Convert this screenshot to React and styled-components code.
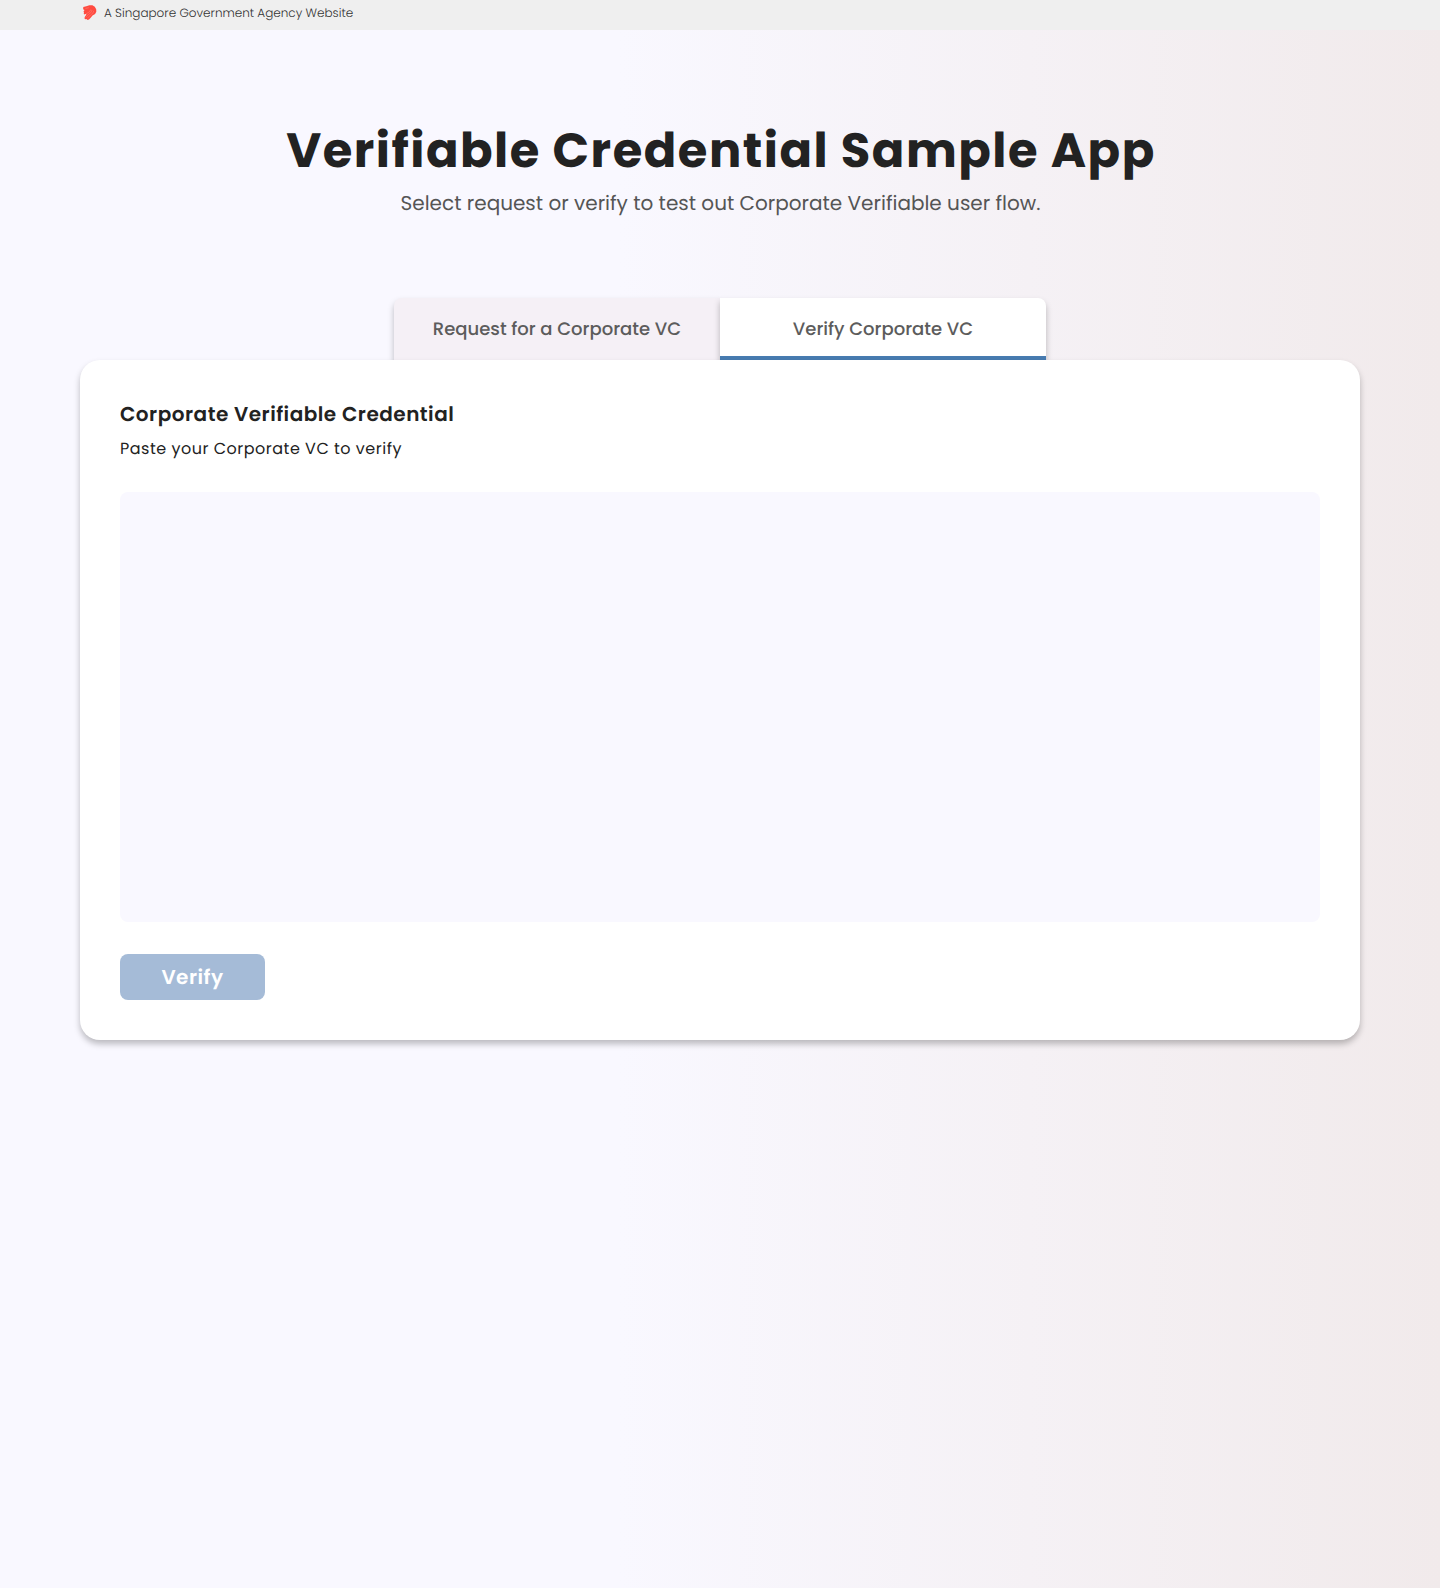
import React from 'react';
import styled, { createGlobalStyle, css } from 'styled-components';

const GlobalStyle = createGlobalStyle`
  *, *::before, *::after { box-sizing: border-box; }
  body {
    margin: 0;
    font-family: Poppins, Inter, 'Liberation Sans', sans-serif;
    color: #222;
    text-rendering: geometricPrecision;
  }
  h1, h2, p { margin: 0; }
`;

const Page = styled.div`
  min-height: 1588px;
  display: flex;
  flex-direction: column;
  background: linear-gradient(90deg, #f9f8ff 43%, #f1eaeb 100%);
`;

const Masthead = styled.header`
  height: 30px;
  padding: 0 82px 4px;
  display: flex;
  align-items: center;
  gap: 6px;
  background: #efefef;
  font-size: 12px;
  font-weight: 300;
  color: #333;
  white-space: nowrap;
`;

const AgencyLabel = styled.span`
  padding-top: 2px;
  line-height: 18px;
`;

const Main = styled.main`
  padding: 91px 80px 0;
  display: flex;
  flex-direction: column;
  align-items: center;
`;

const Title = styled.h1`
  padding-left: 2px;
  font-size: 48px;
  line-height: 60px;
  font-weight: 700;
  letter-spacing: 1.5px;
  white-space: nowrap;
`;

const Subtitle = styled.p`
  margin-top: 7px;
  padding-left: 1px;
  font-size: 20px;
  line-height: 30px;
  color: #555;
  white-space: nowrap;
`;

const Tabs = styled.nav`
  margin-top: 80px;
  width: 652px;
  height: 62px;
  display: flex;
`;

const Tab = styled.button`
  flex: 1;
  padding: 4px 0 0;
  border: 0;
  border-bottom: 4px solid transparent;
  border-radius: 8px 0 0 0;
  background: #f5f0f6;
  color: #5c5c5c;
  font-family: inherit;
  font-size: 18px;
  font-weight: 500;
  text-rendering: inherit;
  box-shadow: 0 4px 6px rgba(0, 0, 0, 0.25);
  ${(p) => p.$active && css`
    border-radius: 0 8px 0 0;
    border-bottom-color: #477bb0;
    background: #fff;
  `}
`;

const Card = styled.section`
  position: relative;
  width: 100%;
  height: 680px;
  padding: 38px 40px 40px;
  display: flex;
  flex-direction: column;
  align-items: flex-start;
  border-radius: 20px;
  background: #fff;
  box-shadow: 0 4px 6px rgba(0, 0, 0, 0.25);
`;

const CardTitle = styled.h2`
  font-size: 20px;
  line-height: 32px;
  font-weight: 600;
  letter-spacing: 0.5px;
`;

const Hint = styled.p`
  margin-top: 7px;
  font-size: 16px;
  line-height: 24px;
  letter-spacing: 0.5px;
`;

const Credential = styled.textarea`
  margin-top: 31px;
  width: 100%;
  height: 430px;
  padding: 16px;
  border: 0;
  border-radius: 8px;
  background: #f9f8ff;
  resize: none;
`;

const VerifyButton = styled.button`
  margin-top: 32px;
  width: 145px;
  height: 46px;
  border: 0;
  border-radius: 8px;
  background: #a5bbd7;
  color: #fff;
  font-family: inherit;
  font-size: 20px;
  font-weight: 600;
  letter-spacing: 0.5px;
  text-rendering: inherit;
`;

function Lion() {
  return (
    <svg width="16" height="18" viewBox="0 0 16 18" aria-hidden="true">
      <path
        fill="#ff4b40"
        d="M1.3 3.1 4.3 2.2 7.4 1.2l3 .1 2.4 1.4 1.4 2.5.1 2.6-1.2 2.3-2.6 1.4-1.8 2.3-1.7 1.7-1.4.4-1.2-1-1.1.3-.9-1 .6-1.6 1.1-1.6.2-1.3-1.9.7-.7-1 .3-.9-.5-1 1-1.4-1.4-.9Z"
      />
      <path
        fill="none"
        stroke="#ff9087"
        strokeWidth=".45"
        d="M3.4 4.5l3.4-.8M4.3 9.7l3.1-1.8 1.4-2.4M3.5 13.4l3.2-3.2 2.2-1.6 1.2-2.6M5.4 14.3l3.1-3.3 2.2-1.6 1.1-2.6"
      />
    </svg>
  );
}

export default function App() {
  return (
    <>
      <GlobalStyle />
      <Page>
        <Masthead>
          <Lion />
          <AgencyLabel>A Singapore Government Agency Website</AgencyLabel>
        </Masthead>
        <Main>
          <Title>Verifiable Credential Sample App</Title>
          <Subtitle>Select request or verify to test out Corporate Verifiable user flow.</Subtitle>
          <Tabs>
            <Tab>Request for a Corporate VC</Tab>
            <Tab $active>Verify Corporate VC</Tab>
          </Tabs>
          <Card>
            <CardTitle>Corporate Verifiable Credential</CardTitle>
            <Hint>Paste your Corporate VC to verify</Hint>
            <Credential aria-label="Corporate VC" />
            <VerifyButton disabled>Verify</VerifyButton>
          </Card>
        </Main>
      </Page>
    </>
  );
}
